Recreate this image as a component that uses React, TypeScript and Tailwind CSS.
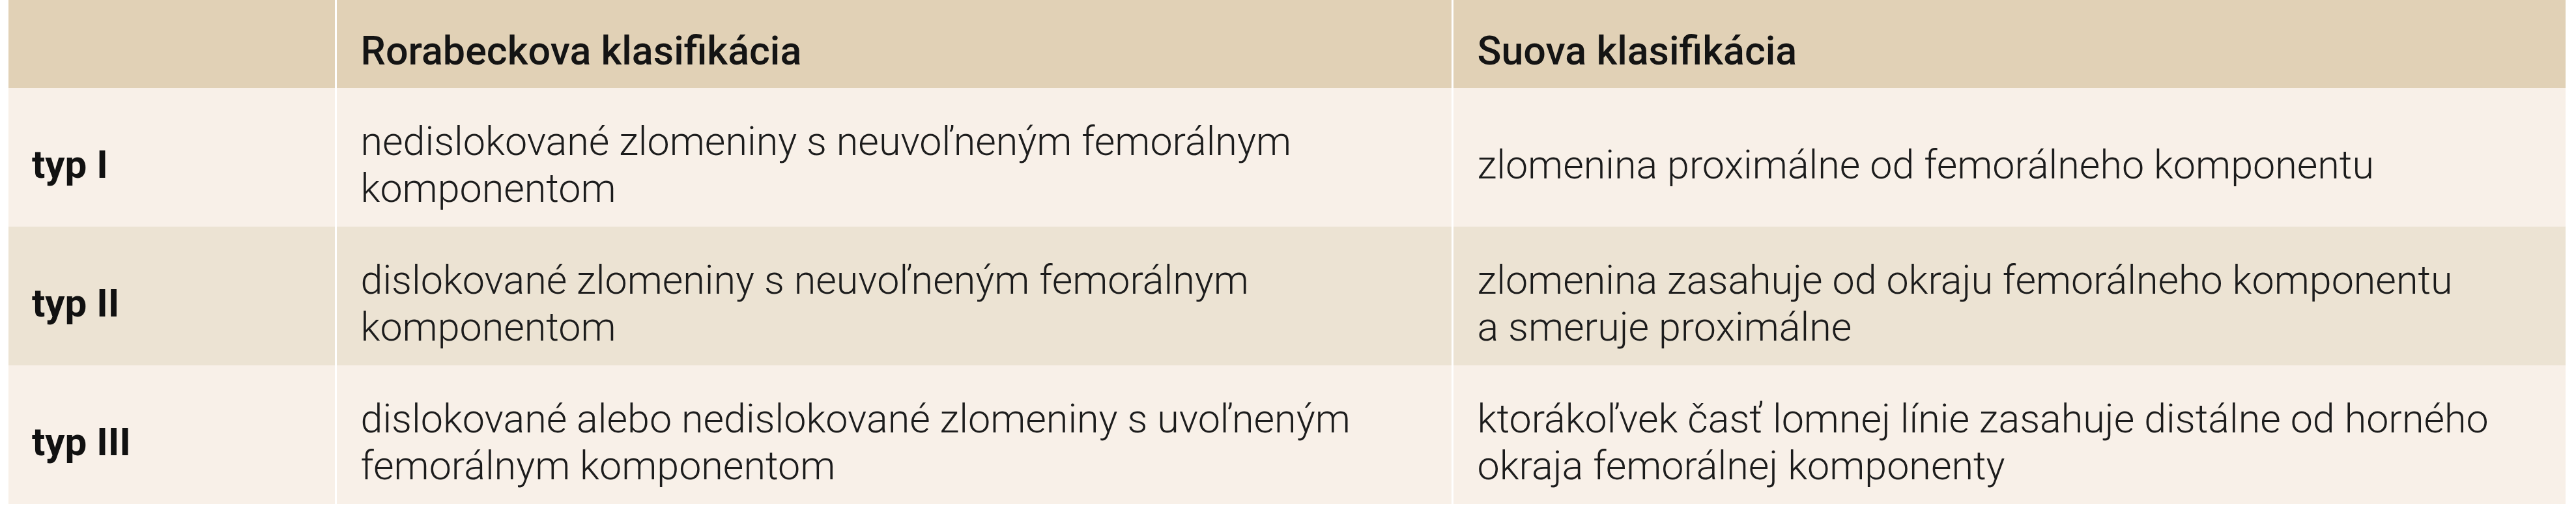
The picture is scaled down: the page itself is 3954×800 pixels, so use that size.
import React from 'react';

type Row = {
  label: string;
  rorabeck: string[];
  su: string[];
  tone: 'light' | 'dark';
};

const rows: Row[] = [
  {
    label: 'typ I',
    rorabeck: ['nedislokované zlomeniny s neuvoľneným femorálnym', 'komponentom'],
    su: ['zlomenina proximálne od femorálneho komponentu'],
    tone: 'light',
  },
  {
    label: 'typ II',
    rorabeck: ['dislokované zlomeniny s neuvoľneným femorálnym', 'komponentom'],
    su: ['zlomenina zasahuje od okraju femorálneho komponentu', 'a smeruje proximálne'],
    tone: 'dark',
  },
  {
    label: 'typ III',
    rorabeck: ['dislokované alebo nedislokované zlomeniny s uvoľneným', 'femorálnym komponentom'],
    su: ['ktorákoľvek časť lomnej línie zasahuje distálne od horného', 'okraja femorálnej komponenty'],
    tone: 'light',
  },
];

const Lines: React.FC<{ lines: string[] }> = ({ lines }) => (
  <>
    {lines.map((line, i) => (
      <span key={i} className="block">
        {line}
      </span>
    ))}
  </>
);

const App: React.FC = () => {
  return (
    <div className="w-[3954px] h-[800px] bg-white pl-[13px] font-['Roboto',sans-serif] text-[#1c1c1c]">
      <table className="w-[3925px] table-fixed border-collapse">
        <thead>
          <tr className="h-[135px] bg-[#e1d1b6]">
            <th className="w-[502px] border-r-[3px] border-white"></th>
            <th className="w-[1714px] border-r-[3px] border-white pl-[37px] pr-[37px] pt-[20px] text-left align-middle text-[61px] leading-[72px] font-medium text-[#141414]">
              Rorabeckova klasifikácia
            </th>
            <th className="pl-[37px] pr-[37px] pt-[20px] text-left align-middle text-[61px] leading-[72px] font-medium text-[#141414]">
              Suova klasifikácia
            </th>
          </tr>
        </thead>
        <tbody>
          {rows.map((row) => (
            <tr
              key={row.label}
              className={row.tone === 'light' ? 'h-[213px] bg-[#f8f0e8]' : 'h-[213px] bg-[#ece3d3]'}
            >
              <td className="border-r-[3px] border-white pl-[36px] pt-[22px] align-middle text-[60px] leading-[72px] font-bold text-[#111111]">
                {row.label}
              </td>
              <td className="border-r-[3px] border-white pl-[37px] pr-[37px] pt-[22px] align-middle text-[61px] leading-[72px] font-light">
                <Lines lines={row.rorabeck} />
              </td>
              <td className="pl-[37px] pr-[37px] pt-[22px] align-middle text-[61px] leading-[72px] font-light">
                <Lines lines={row.su} />
              </td>
            </tr>
          ))}
        </tbody>
      </table>
    </div>
  );
};

export default App;
